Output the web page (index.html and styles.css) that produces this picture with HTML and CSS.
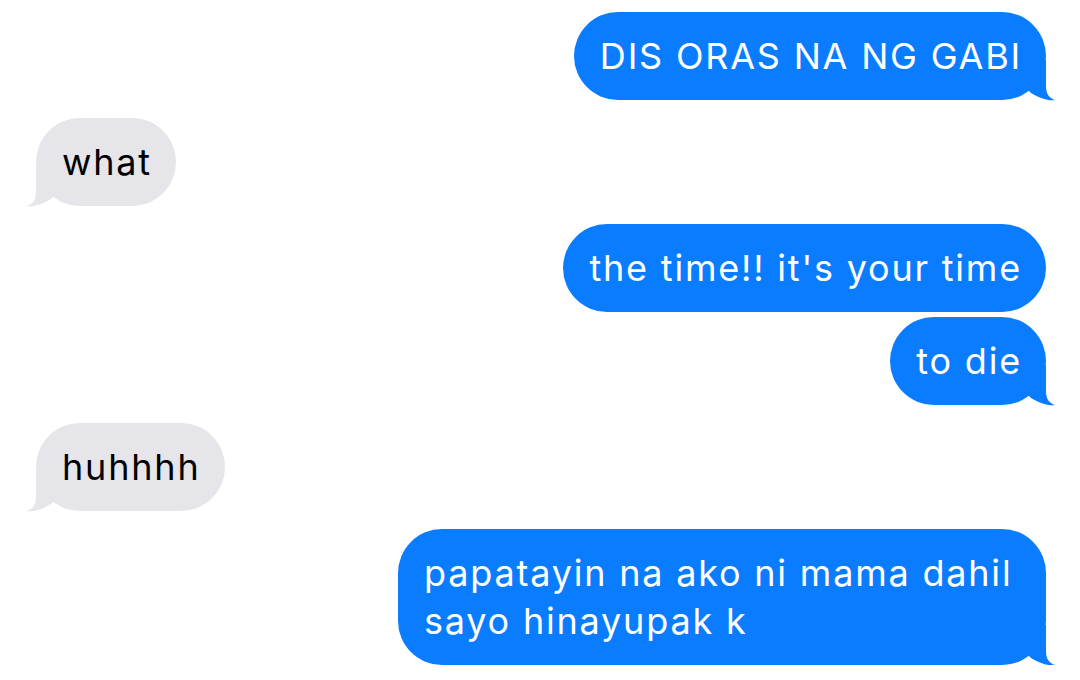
FILE: index.html
```html
<!DOCTYPE html>
<html lang="en">
<head>
<meta charset="UTF-8">
<meta name="viewport" content="width=device-width, initial-scale=1.0">
<title>Messages</title>
<link rel="stylesheet" href="styles.css">
</head>
<body>
    <div class="thread">
        <div class="bubble sent">DIS ORAS NA NG GABI
            <svg class="tail" viewBox="0 0 40 40"><path d="M0 0H28V26C28 34 31 38 37 40C31 41 23 39 13 33L0 20Z"/></svg>
        </div>
        <div class="bubble received">what
            <svg class="tail" viewBox="0 0 40 40"><path d="M0 0H28V26C28 34 31 38 37 40C31 41 23 39 13 33L0 20Z"/></svg>
        </div>
        <div class="bubble sent">the time!! it's your time</div>
        <div class="bubble sent grouped">to die
            <svg class="tail" viewBox="0 0 40 40"><path d="M0 0H28V26C28 34 31 38 37 40C31 41 23 39 13 33L0 20Z"/></svg>
        </div>
        <div class="bubble received">huhhhh
            <svg class="tail" viewBox="0 0 40 40"><path d="M0 0H28V26C28 34 31 38 37 40C31 41 23 39 13 33L0 20Z"/></svg>
        </div>
        <div class="bubble sent">papatayin na ako ni mama dahil sayo hinayupak k
            <svg class="tail" viewBox="0 0 40 40"><path d="M0 0H28V26C28 34 31 38 37 40C31 41 23 39 13 33L0 20Z"/></svg>
        </div>
    </div>
</body>
</html>
```

FILE: styles.css
```css
body {
    margin: 0;
    background: #fff;
    font-family: Inter, Roboto, sans-serif;
}
.thread {
    display: flex;
    flex-direction: column;
    gap: 18px;
    padding: 12px 34px 0 36px;
}
.bubble {
    position: relative;
    max-width: 598px;
    padding: 20px 24px 20px 26px;
    border-radius: 44px;
    font-size: 36px;
    line-height: 48px;
    letter-spacing: 1.8px;
}
.sent {
    align-self: flex-end;
    background: #0a7cff;
    color: #fff;
}
.received {
    align-self: flex-start;
    background: #e5e5ea;
    color: #000;
}
.grouped {
    margin-top: -13px;
}

/* tails */
.tail {
    position: absolute;
    bottom: 0;
    width: 40px;
    height: 40px;
    overflow: visible;
}
.sent .tail {
    right: -12px;
    fill: #0a7cff;
}
.received .tail {
    left: -12px;
    fill: #e5e5ea;
    transform: scaleX(-1);
}
```
